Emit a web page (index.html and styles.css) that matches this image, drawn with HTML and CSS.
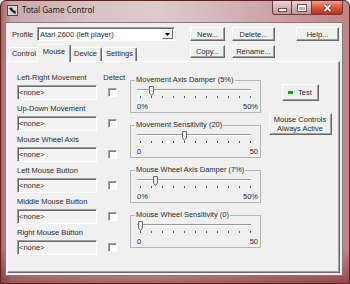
FILE: index.html
```html
<!DOCTYPE html>
<html>
<head>
  <title>Total Game Control</title>
  <link rel="stylesheet" href="styles.css">
</head>
<body>
  <div class="window">
    <div class="titlebar">
      <svg class="app-icon" viewBox="0 0 11 11">
        <rect x="0.5" y="0.5" width="10" height="10" fill="#d9d9d9" stroke="#4a4a4a"/>
        <path d="M2 3 L5 2.5 L6 5 L8.5 6 L9 9 L6.5 8 L4 6 Z" fill="#1a1a1a"/>
      </svg>
      <span class="title">Total Game Control</span>
      <div class="caption">
        <span class="cap cap-min"><span class="glyph-min"></span></span>
        <span class="cap cap-max"><span class="glyph-max"></span></span>
        <span class="cap cap-close">
          <svg viewBox="0 0 9 8" class="glyph-close">
            <path d="M1.5 1 L7.5 7 M7.5 1 L1.5 7" stroke="#5a1a10" stroke-width="3"/>
            <path d="M1.5 1 L7.5 7 M7.5 1 L1.5 7" stroke="#fff" stroke-width="1.8"/>
          </svg>
        </span>
      </div>
    </div>

    <div class="client">
      <div class="head">
        <div class="profile">
          <label>Profile</label>
          <div class="combo">
            <span class="combo-text">Atari 2600 (left player)</span>
            <span class="combo-btn">
              <svg viewBox="0 0 5 3" class="arrow"><path d="M0 0 H5 L2.5 3 Z" fill="#000"/></svg>
            </span>
          </div>
        </div>
        <div class="btn-row">
          <button class="btn btn-new">New...</button>
          <button class="btn btn-wide">Delete...</button>
          <button class="btn btn-wide btn-help">Help...</button>
        </div>
        <div class="tabs">
          <span class="tab tab-control">Control</span>
          <span class="tab tab-mouse active">Mouse</span>
          <span class="tab tab-device">Device</span>
          <span class="tab tab-settings">Settings</span>
        </div>
        <div class="btn-row row-two">
          <button class="btn btn-new">Copy...</button>
          <button class="btn btn-wide">Rename...</button>
        </div>
      </div>

      <div class="panel">
        <div class="inputs">
          <div class="field">
            <div class="field-label">Left-Right Movement <span class="detect">Detect</span></div>
            <div class="field-line"><span class="input">&lt;none&gt;</span><span class="check"></span></div>
          </div>
          <div class="field">
            <div class="field-label">Up-Down Movement</div>
            <div class="field-line"><span class="input">&lt;none&gt;</span><span class="check"></span></div>
          </div>
          <div class="field">
            <div class="field-label">Mouse Wheel Axis</div>
            <div class="field-line"><span class="input">&lt;none&gt;</span><span class="check"></span></div>
          </div>
          <div class="field">
            <div class="field-label">Left Mouse Button</div>
            <div class="field-line"><span class="input">&lt;none&gt;</span><span class="check"></span></div>
          </div>
          <div class="field">
            <div class="field-label">Middle Mouse Button</div>
            <div class="field-line"><span class="input">&lt;none&gt;</span><span class="check"></span></div>
          </div>
          <div class="field">
            <div class="field-label">Right Mouse Button</div>
            <div class="field-line"><span class="input">&lt;none&gt;</span><span class="check"></span></div>
          </div>
        </div>

        <div class="groups">
          <fieldset class="group">
            <legend>Movement Axis Damper (5%)</legend>
            <div class="slider"><div class="track"></div><svg class="thumb" style="left: 14px" viewBox="0 0 5 10"><path d="M0.5 0.5 H4.5 V7 L2.5 9.5 L0.5 7 Z" fill="#ececec" stroke="#6a6a6a"/></svg></div>
            <div class="ticks"><i></i><i></i><i></i><i></i><i></i><i></i><i></i><i></i><i></i><i></i><i></i></div>
            <div class="scale"><span>0%</span><span>50%</span></div>
          </fieldset>
          <fieldset class="group">
            <legend>Movement Sensitivity (20)</legend>
            <div class="slider"><div class="track"></div><svg class="thumb" style="left: 47px" viewBox="0 0 5 10"><path d="M0.5 0.5 H4.5 V7 L2.5 9.5 L0.5 7 Z" fill="#ececec" stroke="#6a6a6a"/></svg></div>
            <div class="ticks"><i></i><i></i><i></i><i></i><i></i><i></i><i></i><i></i><i></i><i></i><i></i></div>
            <div class="scale"><span>0</span><span>50</span></div>
          </fieldset>
          <fieldset class="group">
            <legend>Mouse Wheel Axis Damper (7%)</legend>
            <div class="slider"><div class="track"></div><svg class="thumb" style="left: 18px" viewBox="0 0 5 10"><path d="M0.5 0.5 H4.5 V7 L2.5 9.5 L0.5 7 Z" fill="#ececec" stroke="#6a6a6a"/></svg></div>
            <div class="ticks"><i></i><i></i><i></i><i></i><i></i><i></i><i></i><i></i><i></i><i></i><i></i></div>
            <div class="scale"><span>0%</span><span>50%</span></div>
          </fieldset>
          <fieldset class="group">
            <legend>Mouse Wheel Sensitivity (0)</legend>
            <div class="slider"><div class="track"></div><svg class="thumb" style="left: 3px" viewBox="0 0 5 10"><path d="M0.5 0.5 H4.5 V7 L2.5 9.5 L0.5 7 Z" fill="#ececec" stroke="#6a6a6a"/></svg></div>
            <div class="ticks"><i></i><i></i><i></i><i></i><i></i><i></i><i></i><i></i><i></i><i></i><i></i></div>
            <div class="scale"><span>0</span><span>50</span></div>
          </fieldset>
        </div>

        <div class="side">
          <button class="btn btn-test"><span class="led"></span>Test</button>
          <button class="btn btn-always">Mouse Controls<br>Always Active</button>
        </div>
      </div>
    </div>
  </div>
</body>
</html>
```

FILE: styles.css
```css
body {
  margin: 0;
  width: 350px;
  height: 284px;
  overflow: hidden;
  font-family: "Liberation Sans", Arial, sans-serif;
  font-size: 7.5px;
  color: #2b2b2b;
}

.window {
  box-sizing: border-box;
  height: 284px;
  display: flex;
  flex-direction: column;
  padding: 0 6px 7px 4px;
  border: 1px solid #5e2020;
  border-radius: 6px 6px 0 0;
  background:
    linear-gradient(to bottom, rgba(120, 20, 20, 0) 0, rgba(120, 20, 20, 0) 88%, rgba(110, 20, 20, 0.55) 100%),
    linear-gradient(to right, #a96466 0, #c9a9aa 3%, #d6c3c4 25%, #dccccd 45%, #cfaeb0 70%, #bf8587 100%);
}

/* title bar */

.titlebar {
  flex: none;
  height: 21px;
  display: flex;
  align-items: flex-start;
}

.app-icon {
  width: 11px;
  height: 11px;
  margin: 4px 0 0 2px;
}

.title {
  margin: 3px 0 0 4px;
  font-family: "Noto Sans", "Liberation Sans", sans-serif;
  font-size: 8px;
  line-height: 12px;
  color: #1a1a1a;
}

.caption {
  margin-left: auto;
  display: flex;
}

.cap {
  box-sizing: border-box;
  width: 20px;
  height: 14px;
  display: flex;
  align-items: center;
  justify-content: center;
  border: 1px solid #6e3b3b;
  border-top: none;
  background: linear-gradient(#e8d6d7, #d3b4b6 50%, #c19597);
}

.cap + .cap {
  border-left: none;
}

.cap-min {
  border-radius: 0 0 0 3px;
}

.cap-close {
  width: 31px;
  border-radius: 0 0 3px 0;
  background: linear-gradient(#eca594, #d65840 50%, #b8301e);
}

.glyph-min {
  width: 7px;
  height: 2px;
  margin-top: 4px;
  background: #fff;
  box-shadow: 0 0 0 1px #7a4a4a;
}

.glyph-max {
  box-sizing: border-box;
  width: 8px;
  height: 6px;
  border: 1px solid #fff;
  border-top-width: 2px;
  box-shadow: 0 0 0 1px #7a4a4a;
}

.glyph-close {
  width: 9px;
  height: 8px;
}

/* client area */

.client {
  flex: 1;
  display: flex;
  flex-direction: column;
  background: #f0f0f0;
  border: 1px solid #8e7878;
}

.head {
  display: grid;
  grid-template-columns: 183px auto;
  grid-template-rows: 14px 17px;
  row-gap: 3px;
  margin: 4px 0 0 1px;
}

.profile {
  display: flex;
  align-items: center;
  padding-left: 5px;
}

.profile label {
  width: 25px;
}

.combo {
  box-sizing: border-box;
  width: 138px;
  height: 14px;
  display: flex;
  align-items: center;
  background: #fff;
  border: 1px solid;
  border-color: #a0a0a0 #fff #fff #a0a0a0;
  box-shadow: inset 1px 1px #696969;
}

.combo-text {
  flex: 1;
  padding-left: 2px;
}

.combo-btn {
  box-sizing: border-box;
  width: 11px;
  height: 10px;
  margin-right: 1px;
  display: flex;
  align-items: center;
  justify-content: center;
  background: #f0f0f0;
  border: 1px solid;
  border-color: #fff #696969 #696969 #fff;
}

.arrow {
  width: 5px;
  height: 3px;
}

.btn-row {
  display: flex;
  gap: 7px;
}

.row-two {
  margin-top: 1px;
}

.btn {
  box-sizing: border-box;
  height: 14px;
  padding: 0;
  font: inherit;
  line-height: 11px;
  color: #2b2b2b;
  background: #f0f0f0;
  border: 1px solid;
  border-color: #fff #696969 #696969 #fff;
  box-shadow: inset -1px -1px #a0a0a0;
}

.row-two .btn {
  height: 13px;
}

.btn-new {
  width: 35px;
}

.btn-wide {
  width: 43px;
}

.btn-help {
  margin-left: 14px;
}

/* tabs */

.tabs {
  display: flex;
  align-items: flex-end;
  align-self: end;
  margin-left: 2px;
}

.tab {
  box-sizing: border-box;
  height: 14px;
  text-align: center;
  line-height: 12px;
  border: 1px solid;
  border-color: #fff #696969 transparent #fff;
  border-bottom: none;
  border-radius: 2px 2px 0 0;
  box-shadow: inset -1px 0 #a0a0a0;
}

.tab-control {
  width: 30px;
}

.tab-mouse {
  width: 30px;
}

.tab-device {
  width: 33px;
}

.tab-settings {
  width: 35px;
}

.tab.active {
  position: relative;
  z-index: 1;
  width: 34px;
  height: 18px;
  margin: 0 -2px -1px;
  line-height: 14px;
  background: #f0f0f0;
}

/* tab page */

.panel {
  flex: 1;
  display: flex;
  margin: 0 2px 2px 1px;
  border: 1px solid;
  border-color: #fff #696969 #696969 #fff;
  box-shadow: inset -1px -1px #a0a0a0;
}

.inputs {
  width: 108px;
  margin: 11px 0 0 9px;
}

.field-label {
  display: flex;
  height: 10px;
  line-height: 10px;
  margin-bottom: 2px;
  white-space: nowrap;
}

.detect {
  margin-left: auto;
}

.field-line {
  display: flex;
  align-items: center;
  height: 15px;
  margin-bottom: 4px;
}

.input {
  box-sizing: border-box;
  width: 80px;
  height: 15px;
  padding-left: 1px;
  line-height: 13px;
  background: #f4f4f4;
  border: 1px solid;
  border-color: #a0a0a0 #fff #fff #a0a0a0;
  box-shadow: inset 1px 1px #696969;
}

.check {
  box-sizing: border-box;
  width: 9px;
  height: 9px;
  margin-left: 11px;
  background: #fafafa;
  border: 1px solid;
  border-color: #a0a0a0 #fff #fff #a0a0a0;
  box-shadow: inset 1px 1px #808080;
}

/* slider groups */

.groups {
  width: 131px;
  margin: 13px 0 0 5px;
}

.group {
  min-width: 0;
  margin: 0 0 7px;
  padding: 0 0 0 4px;
  border: 1px solid #b4b4b4;
}

.group legend {
  padding: 0 1px;
  line-height: 10px;
}

.slider {
  position: relative;
  width: 114px;
  height: 6px;
  padding-top: 4px;
  margin-left: 2px;
}

.track {
  box-sizing: border-box;
  height: 2px;
  border-top: 1px solid #9a9a9a;
  border-bottom: 1px solid #fff;
}

.thumb {
  position: absolute;
  top: 1px;
  width: 5px;
  height: 10px;
  margin-left: -2px;
}

.ticks {
  display: flex;
  justify-content: space-between;
  width: 111px;
  height: 2px;
  margin: 1px 0 0 5px;
}

.ticks i {
  width: 1px;
  height: 2px;
  background: #555;
}

.scale {
  display: flex;
  justify-content: space-between;
  width: 121px;
  margin: 4px 0 0 2px;
  line-height: 10px;
}

/* right buttons */

.side {
  flex: 1;
  display: flex;
  flex-direction: column;
  align-items: center;
  padding-top: 22px;
}

.btn-test {
  width: 37px;
  height: 17px;
  display: flex;
  align-items: center;
  justify-content: center;
  gap: 5px;
}

.led {
  width: 5px;
  height: 3px;
  background: #1f9e1f;
}

.btn-always {
  width: 63px;
  height: 22px;
  margin-top: 12px;
  line-height: 9px;
}
```
